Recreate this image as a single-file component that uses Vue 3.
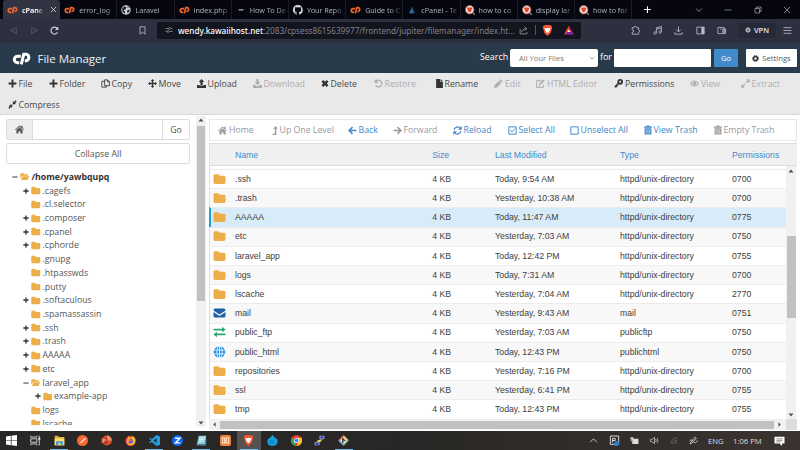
<script setup>
import { h } from 'vue'

const line = (d, w = 1.5) => `<path d="${d}" fill="none" stroke="currentColor" stroke-width="${w}"/>`
const fill = (d, c = 'currentColor') => `<path d="${d}" fill="${c}"/>`

const art = {
  cp: ['<path d="M8.800 4.300H5.500a3.200 3.200 0 0 0 0 6.400h1.700M9.300 12.300L11.700 2.300H14.300a3.300 3.300 0 0 1 0 6.400H12.800" fill="none" stroke="currentColor" stroke-width="3"/>', '0 0 19 13'],
  globeTab: ['<circle cx="8" cy="8" r="7.500" fill="#d8dade"/><path d="M2 5l4-3 3 2-2 3-3 1 3 3-1 3-4-4zM10 8l4-1-1 4-3 2zM10 2l3 2-2 1z" fill="#20222d"/>'],
  dash: [fill('M4 7h8v1.600H4z')],
  github: [fill('M8 0a8 8 0 0 0-2.500 15.600c.4 0 .5-.2.5-.4v-1.500c-2.200.5-2.700-1-2.700-1-.4-.9-.9-1.200-.9-1.200-.7-.5.1-.5.1-.5.8.1 1.200.8 1.200.8.7 1.300 1.900.9 2.300.7.1-.5.3-.9.500-1.100-1.800-.2-3.600-.9-3.600-4 0-.9.300-1.600.8-2.100-.1-.2-.4-1 .1-2.100 0 0 .7-.2 2.200.8a7.600 7.600 0 0 1 4 0c1.500-1 2.200-.8 2.200-.8.4 1.100.2 1.900.1 2.100.5.6.8 1.300.8 2.100 0 3.100-1.900 3.700-3.700 3.900.3.300.6.8.6 1.500v2.200c0 .2.100.5.600.4A8 8 0 0 0 8 0z')],
  triTab: ['<path d="M8 2L3 13h10z" fill="#1d4a70"/><path d="M8 5l-3 8h4z" fill="#3a83b8"/>'],
  braveSearch: ['<circle cx="7.500" cy="7.500" r="6.800" fill="#f3dcd7" stroke="#a65c50" stroke-width="1.300"/><path d="M4.500 4h6l1 1.500-1.800 5L7.500 12l-2.200-1.500-1.800-5z" fill="#d94a2b"/><path d="M12.500 12.500l3 3" stroke="#b08a86" stroke-width="2"/>'],
  plus: [fill('M6.300 1h3.400v5.300H15v3.400H9.700V15H6.300V9.700H1V6.300h5.300z')],
  thinPlus: [line('M8 2v12M2 8h12', 2)],
  minus: [fill('M1 6.800h14v2.600H1z')],
  winMin: [line('M1 8h14', 1.300)],
  chev: [line('M2.500 5L8 11l5.500-6')],
  chevUp: [line('M2 11l6-6 6 6')],
  restoreWin: [line('M2 5h9v9H2zM5 5V2h9v9h-3', 1.400)],
  close: [line('M2 2l12 12M14 2L2 14')],
  back: [line('M13 2.500v11L3 8z', 1.400)],
  forward: [line('M3 2.500v11L13 8z', 1.400)],
  reload: [line('M13.500 11A6.200 6.200 0 1 1 13 4.500', 2) + fill('M14.800 1v6H9z')],
  bookmark: [line('M3.500 1.500h9v13L8 11l-4.500 3.500z')],
  tune: [line('M1 5h6M1 11h3M9 11h6M12 5h3', 1.700) + '<circle cx="9" cy="5" r="2" fill="none" stroke="currentColor" stroke-width="1.500"/><circle cx="6" cy="11" r="2" fill="none" stroke="currentColor" stroke-width="1.500"/>'],
  share: [line('M2 5v9h12v-3M5 11c0-4 3-6 8-6M10 1.500L14 5l-4 3')],
  lion: ['<path d="M4 0h8l1.500 1.500L15 2l-.500 3-2 7L8 16l-4.500-4-2-7L1 2l1.500-.500z" fill="#f0562b"/><path d="M3.500 4l3 .8L8 4l1.500.8 3-.8-1 4-1.500 1 .500 1L8 12l-2.500-2 .500-1-1.500-1z" fill="#fff"/>'],
  bat: ['<path d="M8 1L0 15h16z" fill="#9d1f79"/><path d="M8 1L0 15l8-4.500z" fill="#ff4a18"/><path d="M0 15h16l-8-5z" fill="#712b97"/><path d="M8 7l-2.500 4h5z" fill="#fff"/>'],
  puzzle: [line('M2 3h3a2.500 2.500 0 0 1 5 0h3.500v4a2.300 2.300 0 0 1 0 4.500V14.500H2v-3a2.500 2.500 0 0 0 0-5z')],
  music: [line('M6 12V3l9-2v9M6 5.500l9-2') + '<circle cx="3.800" cy="12.500" r="2.200" fill="none" stroke="currentColor" stroke-width="1.400"/><circle cx="12.600" cy="10.500" r="2.200" fill="none" stroke="currentColor" stroke-width="1.400"/>'],
  dl: [line('M8 1v9M4 6.500L8 10.500l4-4M1.500 11v3.500h13V11')],
  panel: [line('M1.500 2h13v12h-13z') + fill('M9.500 2h5v12h-5z')],
  wallet: [line('M1.500 2.500h11v11h-11zM12.500 5H15v8.500h-3M5 5.500h10M9.500 8.500H15V11H9.500z', 1.400)],
  vpn: ['<circle cx="8" cy="8" r="5.500" fill="none" stroke="currentColor" stroke-width="2.500"/>' + line('M3 6h10M3 10h10M8 2v12', 1)],
  menu: [line('M1 3h14M1 8h14M1 13h14')],
  gear: ['<circle cx="8" cy="8" r="4.500" fill="none" stroke="currentColor" stroke-width="3.500"/><circle cx="8" cy="8" r="6.900" fill="none" stroke="currentColor" stroke-width="2" stroke-dasharray="2.900 2.520"/>'],
  copy: [line('M6.500 1.500h5L15 5v7H6.500zM11.500 1.500V5H15M6.500 4H1.500v10.500h8V12', 1.500)],
  move: [fill('M8 0l3.200 3.500H9.200v3.300h3.300V4.800L16 8l-3.500 3.200V9.200H9.200v3.300h2L8 16l-3.200-3.500h2V9.200H3.500v2L0 8l3.500-3.200v2h3.300V3.500h-2z')],
  upload: [fill('M8 0l5 5.500h-3V11H6V5.500H3zM0 10.500h4.500V12h7v-1.500H16V16H0z')],
  download: [fill('M6 0h4v5.500h3L8 11 3 5.500h3zM0 10.500h3.500L8 13.500l4.500-3H16V16H0z')],
  times: [fill('M4.500 1L8 4.500 11.500 1 15 4.500 11.500 8l3.500 3.500-3.500 3.500L8 11.500 4.500 15 1 11.500 4.500 8 1 4.500z')],
  undo: [line('M3.500 4A6 6 0 1 1 3 11.500', 2.200) + fill('M1 0v7h7z')],
  file: [fill('M0 0h7v5h5v11H0zM8 0l4 4H8z'), '0 0 12 16'],
  pencil: [fill('M11.500.500l4 4-2 2-4-4zM8.500 3.500l4 4L5 15l-5 1 1-5z')],
  compose: [line('M13 9.500V15H1V2.500h8.500', 1.700) + fill('M13 .500L15.500 3 9 9.500l-4 1.500 1.500-4z') + line('M3.500 5h3M3.500 12.500h6', 1)],
  key: ['<circle cx="11" cy="5" r="3.400" fill="none" stroke="currentColor" stroke-width="3.200"/>' + line('M9 7L1.500 14.500M3.500 12l2 2', 3)],
  eye: [line('M1 8c3.500-6 10.500-6 14 0-3.500 6-10.500 6-14 0z', 2) + '<circle cx="8" cy="8" r="3.200" fill="currentColor"/>'],
  expand: [fill('M9.500.500h6v6l-2-2-3.200 3.200-1.800-1.800 3.200-3.200zM6.500 15.500h-6v-6l2 2 3.200-3.200 1.800 1.800-3.200 3.200z')],
  compress: [fill('M15.500 2.300L13.700.500 10.700 3.500 9 1.800 8.200 7.800l6-.800-1.700-1.700zM.500 13.700l1.800 1.800 3-3L7 14.200l.800-6-6 .800 1.700 1.700z')],
  home: [fill('M0 8l8-7 3 2.600V1.500h2.500v4.300L16 8l-1 1-7-6-7 6zM2.500 9L8 4.400 13.500 9v6H9.700v-4H6.300v4H2.500z')],
  level: [fill('M6 0l4 5H7.300v11H0l2-2.400h2.700V5H2z'), '0 0 10 16'],
  left: [line('M8 2L2 8l6 6M2 8h13', 2.700)],
  right: [line('M8 2l6 6-6 6M14 8H1', 2.700)],
  refresh: [line('M2 7a6 6 0 0 1 11-2.500M14 9A6 6 0 0 1 3 11.500', 2.200) + fill('M15.500 0v6.500H9zM.500 16V9.500H7z')],
  check: [line('M1.500 1.500h13v13h-13zM4 7.500l3 3 5.500-6', 1.700)],
  box: [line('M1.500 1.500h13v13h-13z', 1.700)],
  trash: [fill('M0 2h4l1-2h4l1 2h4v2H0zM1 5h12v11H1z') + '<path d="M4 6.500v8M7 6.500v8M10 6.500v8" stroke="#fff" stroke-width="1"/>', '0 0 14 16'],
  folder: [fill('M1.500 1.500h5L8.500 3.500h6L16 5v8l-1.500 1.500h-13L0 13V3z')],
  folderOpen: [fill('M1.500 2h5L8 4h6v2.500H4L0 12V3.500zM4.500 7.500H16L13 14H1z')],
  mail: [fill('M1.500 2h13L16 3.500v1L8 10 0 4.500v-1zM0 6.500l8 5.500 8-5.500v6L14.500 14h-13L0 12.500z')],
  swap: [line('M0 4.800h13M3 11.200h13', 2.200) + fill('M11.500 1l4.500 3.800-4.500 3.800zM4.500 7.400L0 11.200 4.500 15z')],
  globe: ['<circle cx="8" cy="8" r="7.700" fill="currentColor"/><g fill="none" stroke="#fff" stroke-width="1.100"><ellipse cx="8" cy="8" rx="3.500" ry="8"/><path d="M8 0v16M0 5.500h16M0 10.500h16"/></g>'],
  up: [fill('M8 5l5 6H3z')],
  down: [fill('M8 11L3 5h10z')],
  triL: [fill('M10.500 3v10L5 8z')],
  triR: [fill('M5.500 3v10L11 8z')],
  windows: ['<path d="M0 2.200l7-1v6.300H0zM8 1l8-1v7.500H8zM0 8.500h7v6.300l-7-1zM8 8.500h8V16l-8-1z" fill="#fff"/>'],
  taskview: [line('M1 1v2h9V1M1 15v-2h9v2M1 5.500h9v5H1zM13.500 1v14', 1.300) + fill('M12 4h3v3h-3z')],
  explorer: ['<path d="M1 1h5l1 2h8v12H1z" fill="#e6ae35"/><path d="M1 5h14v10H1z" fill="#ffdc72"/><path d="M3 9h10v6h-3v-3H6v3H3z" fill="#3e9bd7"/>'],
  postman: ['<circle cx="8" cy="8" r="8" fill="#f76934"/><path d="M4 12l6-7 2-1 .5 2-6 5.500z" fill="#ffd9c8"/>'],
  ppt: ['<circle cx="8.500" cy="8" r="7.300" fill="#d9502f"/><path d="M8.500.700V8h7.300a7.300 7.300 0 0 0-7.300-7.300z" fill="#f08a68"/><rect y="4" width="9" height="8.500" rx="1" fill="#b3301c"/><path d="M3 11V6h2a1.500 1.500 0 0 1 0 3H3" stroke="#fff" fill="none"/>'],
  firefox: ['<circle cx="8" cy="8.500" r="7.500" fill="#f34445"/><path d="M5 1c0 3 3 3 5 3l1-3c3 2 5 5 4 8a6 6 0 0 1-6 6c-4 0-7-3-6-7z" fill="#ffb628"/><circle cx="8" cy="9" r="3.600" fill="#7850d2"/><path d="M4 7c3-2 5 0 5 1l-4 2z" fill="#ff8930"/>'],
  vscode: ['<path d="M11 0l5 2v12l-5 2-7-6-2.500 2L0 11l3.500-3L0 5l1.500-1L4 6zm0 4.500L6.500 8l4.500 3.500z" fill="#259ee0"/>'],
  zoomApp: ['<circle cx="8" cy="8" r="8" fill="#1267ed"/><path d="M4.500 4.700h7L5 11.500h7" fill="none" stroke="#fff" stroke-width="2"/>'],
  notepad: ['<path d="M4 1h11l-2 14H1z" fill="#8dd0dc"/><path d="M5 4h8M4.500 6.500h8M4 9h7" stroke="#effcff" stroke-width="1.200"/><path d="M1 13h12l2-8v10H1z" fill="#4d8493"/>'],
  xampp: ['<rect width="16" height="16" rx="3" fill="#f0823c"/><path d="M3.500 4.500H7v7H3.500zM9 4.500h3.500v7H9zM6 8h4" fill="none" stroke="#fde3cd" stroke-width="1.500"/>'],
  drop: ['<path d="M8 0l3 3.500 4 2.500.5 4-2 4-3 1.500h-5L2 14 .5 10 1 6l4-2.500z" fill="#1a9fe0"/><path d="M4.500 7l6 1 1.500 4-5.500 1.500-3-2z" fill="#0c8bd0"/>'],
  chrome: ['<circle cx="8" cy="8" r="8" fill="#e34133"/><path d="M1 4l5.500 8L8 16A8 8 0 0 1 1 4z" fill="#2da94f"/><path d="M15 4H8l4 5-4 7a8 8 0 0 0 7-12z" fill="#fbc51c"/><circle cx="8" cy="8" r="3.800" fill="#fff"/><circle cx="8" cy="8" r="2.900" fill="#4386ee"/>'],
  putty: ['<path d="M8 1h7v5H8zM1 10h7v5H1z" fill="#9da2d6"/><path d="M9.500 2h4v3h-4zM2.500 11h4v3h-4z" fill="#2430ad"/><path d="M12 7L7 8l3 1-6 1" stroke="#f0dd66" fill="none" stroke-width="1.500"/>'],
  git: ['<path d="M8 0L0 8h8z" fill="#e8695c"/><path d="M8 0l8 8H8z" fill="#e9c95a"/><path d="M0 8l8 8V8z" fill="#7aa8e0"/><path d="M16 8l-8 8V8z" fill="#7dbb6c"/><path d="M8 3l5 5-5 5-5-5z" fill="#f5f2ee"/><path d="M7 4.500v7M7 6l3.500 2.500" stroke="#242424" stroke-width="1.800"/>'],
  tray1: [line('M2 1.500h12v12H2zM5 11V5h4v3H5', 1.400) + '<path d="M8 9h7v5l-3 2H8z" fill="#247ed0"/>'],
  battery: [fill('M4 5h11v9H4zM1 2h5v4H1z') + line('M2 6v3h2', 1.200)],
  speaker: [line('M1 6h3l4-4v12l-4-4H1zM10 5.500q2 2.500 0 5M12.500 4q3 4 0 8', 1.200)],
  wifi: ['<path d="M3 14C4 8 8 4 14 3M6.500 14c1-4 4-6 8-6.500M10 14c.500-2 2-3 4.500-3.200" fill="none" stroke="currentColor" stroke-width="1.300"/>'],
  pen: [line('M2 14l3-1 8-9-2-2-8 9zM1 9c2-3 5-2 7 1s5 3 7-2', 1.500)],
  note: ['<path d="M0 1h16v11h-4v4l-4-4H0z" fill="#fff"/><path d="M3 4.500h10M3 7h10M3 9.500h7" stroke="#555" stroke-width="1"/>'],
}
const Icon = (p) => h('svg', { viewBox: art[p.n][1] || '0 0 16 16', innerHTML: art[p.n][0], 'aria-hidden': 'true' })
Icon.props = ['n']

const tabs = [
  ['cp', 'cPane'], ['cp', 'error_log'], ['globeTab', 'Laravel'], ['cp', 'index.php'], ['dash', 'How To De'],
  ['github', 'Your Repo'], ['cp', 'Guide to C'], ['triTab', 'cPanel - Te'], ['braveSearch', 'how to co'],
  ['braveSearch', 'display lar'], ['braveSearch', 'how to for'],
]
const tools = [
  ['plus', 'File'], ['plus', 'Folder'], ['copy', 'Copy'], ['move', 'Move'], ['upload', 'Upload'],
  ['download', 'Download', 1], ['times', 'Delete'], ['undo', 'Restore', 1], ['file', 'Rename'], ['pencil', 'Edit', 1],
  ['compose', 'HTML Editor', 1], ['key', 'Permissions'], ['eye', 'View', 1], ['expand', 'Extract', 1],
]
const actions = [
  ['home', 'Home', 1], ['level', 'Up One Level', 1], ['left', 'Back'], ['right', 'Forward', 1], ['refresh', 'Reload'],
  ['check', 'Select All'], ['box', 'Unselect All'], ['trash', 'View Trash'], ['trash', 'Empty Trash', 1],
]
const tree = [
  [0, '-', '/home/yawbqupq'], [1, '+', '.cagefs'], [1, '', '.cl.selector'], [1, '+', '.composer'], [1, '+', '.cpanel'],
  [1, '+', '.cphorde'], [1, '', '.gnupg'], [1, '', '.htpasswds'], [1, '', '.putty'], [1, '+', '.softaculous'],
  [1, '', '.spamassassin'], [1, '+', '.ssh'], [1, '+', '.trash'], [1, '+', 'AAAAA'], [1, '+', 'etc'],
  [1, '-', 'laravel_app'], [2, '+', 'example-app'], [1, '', 'logs'], [1, '', 'lscache'],
]
const dir = 'httpd/unix-directory'
const rows = [
  ['folder', '.ssh', 'Today, 9:54 AM', dir, '0700'],
  ['folder', '.trash', 'Yesterday, 10:38 AM', dir, '0700'],
  ['folder', 'AAAAA', 'Today, 11:47 AM', dir, '0775'],
  ['folder', 'etc', 'Yesterday, 7:03 AM', dir, '0750'],
  ['folder', 'laravel_app', 'Today, 12:42 PM', dir, '0755'],
  ['folder', 'logs', 'Today, 7:31 AM', dir, '0700'],
  ['folder', 'lscache', 'Yesterday, 7:04 AM', dir, '2770'],
  ['mail', 'mail', 'Yesterday, 9:43 AM', 'mail', '0751'],
  ['swap', 'public_ftp', 'Yesterday, 7:03 AM', 'publicftp', '0750'],
  ['globe', 'public_html', 'Today, 12:43 PM', 'publichtml', '0750'],
  ['folder', 'repositories', 'Yesterday, 7:16 PM', dir, '0700'],
  ['folder', 'ssl', 'Yesterday, 6:41 PM', dir, '0755'],
  ['folder', 'tmp', 'Today, 12:43 PM', dir, '0755'],
]
const apps = [
  ['windows'], ['taskview'], ['explorer', 1], ['postman'], ['ppt'], ['firefox'], ['vscode', 1], ['zoomApp'],
  ['notepad', 1], ['xampp'], ['lion', 2], ['drop'], ['chrome'], ['putty'], ['git', 1],
]
</script>

<template>
  <div class="screen">
    <div class="tabs">
      <div v-for="(t, i) in tabs" :key="i" class="tab" :class="{ active: i === 0 }">
        <Icon :n="t[0]" class="fav" :class="t[0]" />
        <span>{{ t[1] }}</span>
        <Icon v-if="i === 0" n="close" class="tabx" />
      </div>
      <Icon n="thinPlus" class="newtab" />
      <div class="wincontrols">
        <Icon n="chev" /><Icon n="winMin" /><Icon n="restoreWin" /><Icon n="close" />
      </div>
    </div>

    <div class="nav">
      <div class="navleft"><Icon n="back" class="off" /><Icon n="forward" class="off" /><Icon n="reload" class="rl" /></div>
      <Icon n="bookmark" class="bm" />
      <div class="url">
        <Icon n="tune" class="tune" />
        <span class="addr"><b>wendy.kawaiihost.net</b>:2083/cpsess8615639977/frontend/jupiter/filemanager/index.ht...</span>
        <Icon n="share" class="share" /><i></i><Icon n="lion" class="shield" /><Icon n="bat" class="bat" />
      </div>
      <div class="navright">
        <Icon n="puzzle" /><Icon n="music" /><Icon n="dl" /><Icon n="panel" /><Icon n="wallet" />
      </div>
      <div class="vpn"><Icon n="vpn" />VPN</div>
      <Icon n="menu" class="menu" />
    </div>

    <header>
      <Icon n="cp" class="logo" />
      <h1>File Manager</h1>
      <label class="searchlabel">Search</label>
      <div class="select">All Your Files<Icon n="chev" /></div>
      <label class="for">for</label>
      <div class="input"></div>
      <button class="go">Go</button>
      <button class="settings"><Icon n="gear" />Settings</button>
    </header>

    <div class="toolbar">
      <div class="tools">
        <div v-for="t in tools" :key="t[1]" class="tool" :class="{ dim: t[2] }"><Icon :n="t[0]" :class="'t-' + t[0]" />{{ t[1] }}</div>
      </div>
      <div class="tools second"><div class="tool"><Icon n="compress" />Compress</div></div>
    </div>

    <main>
      <aside>
        <div class="path"><div class="homebtn"><Icon n="home" /></div><div class="pathin"></div><div class="pathgo">Go</div></div>
        <div class="collapse">Collapse All</div>
        <div class="tree">
          <div v-for="n in tree" :key="n[2]" class="node" :class="'level' + n[0]">
            <span class="tog"><Icon v-if="n[1]" :n="n[1] === '+' ? 'plus' : 'minus'" /></span>
            <Icon :n="n[1] === '-' ? 'folderOpen' : 'folder'" class="fold" />
            <span class="nname">{{ n[2] }}</span>
          </div>
        </div>
      </aside>
      <div class="vscroll side"><Icon n="up" /><div class="thumb"></div><Icon n="down" /></div>

      <section>
        <div class="actions">
          <div v-for="a in actions" :key="a[1]" class="act" :class="{ dim: a[2] }"><Icon :n="a[0]" :class="'i-' + a[0]" />{{ a[1] }}</div>
        </div>
        <div class="thead row"><span></span><span>Name</span><span>Size</span><span>Last Modified</span><span>Type</span><span>Permissions</span></div>
        <div class="body">
          <div class="rows">
            <div v-for="(r, i) in rows" :key="r[1]" class="row item" :class="{ odd: i % 2, sel: i === 2 }">
              <span class="ic"><Icon :n="r[0]" :class="'f-' + r[0]" /></span>
              <span>{{ r[1] }}</span><span>4 KB</span><span>{{ r[2] }}</span><span>{{ r[3] }}</span><span>{{ r[4] }}</span>
            </div>
          </div>
          <div class="vscroll list"><Icon n="up" /><div class="thumb"></div><Icon n="down" /></div>
        </div>
        <div class="hscroll"><Icon n="triL" /><div class="hthumb"></div><Icon n="triR" /><div class="corner"></div></div>
      </section>
    </main>

    <footer>
      <div class="apps">
        <div v-for="a in apps" :key="a[0]" class="app" :class="{ open: a[1], front: a[1] === 2 }"><Icon :n="a[0]" /></div>
      </div>
      <div class="tray">
        <Icon n="chevUp" /><Icon n="tray1" class="big" /><Icon n="battery" /><Icon n="speaker" /><Icon n="wifi" class="faint" /><Icon n="pen" />
      </div>
      <span class="lang">ENG</span><span class="time">1:06 PM</span>
      <Icon n="note" class="note" />
    </footer>
  </div>
</template>

<style>
body { overflow: hidden; background: #fff; }
</style>
<style scoped>
* { box-sizing: border-box; }
svg { display: block; flex: none; width: 9px; height: 9px; }
.screen { width: 800px; height: 450px; overflow: hidden; display: flex; flex-direction: column; font-family: "Open Sans", sans-serif; font-size: 8.750px; color: #333; background: #fff; white-space: nowrap; }

.tabs { height: 19px; flex: none; display: flex; align-items: center; padding-left: 3px; background: #05060f; font-family: "Noto Sans", sans-serif; font-size: 7.200px; color: #a9abb5; }
.tab { width: 57.200px; height: 19px; flex: none; display: flex; align-items: center; padding-left: 4px; border-right: 1px solid #1b1c26; }
.tab span { width: 38px; margin-left: 4px; mask-image: linear-gradient(90deg, #000 70%, rgba(0, 0, 0, .15) 100%); }
.tab.active { background: #323443; color: #fff; font-weight: 600; border: 0; border-radius: 3px 3px 0 0; }
.tab.active span { width: 21px; margin-right: 7px; }
.tabx { width: 7px; height: 7px; }
.fav { width: 10px; height: 10px; color: #dadce2; }
.fav.cp { color: #f0642a; width: 11px; height: 8px; }
.newtab { margin-left: 11px; width: 9px; height: 9px; color: #fff; }
.wincontrols { display: flex; justify-content: space-between; width: 96px; margin-left: 43px; color: #a9aab2; }
.wincontrols svg { width: 8px; height: 8px; }

.nav { height: 24px; flex: none; display: flex; align-items: center; padding-bottom: 2px; background: #2d303f; color: #b9bcc6; }
.navleft { width: 58px; margin-left: 9px; display: flex; gap: 11.500px; }
.off { color: #5d606e; }
.rl { color: #d5d7dd; }
.bm { margin-left: 71px; margin-right: 10px; }
.url { width: 424px; height: 17px; display: flex; align-items: center; padding-left: 8px; border-radius: 2px; background: #12141e; font-family: "Noto Sans", sans-serif; font-size: 8.200px; color: #80828c; }
.tune { width: 8px; height: 8px; color: #8b8d98; }
.addr { width: 336px; margin-left: 5px; }
.addr b { color: #fff; font-weight: 500; }
.share { margin-left: 5px; color: #9a9ca6; }
.url i { width: 1px; height: 10px; margin: 0 6px 0 7px; background: #555864; }
.shield { width: 11px; height: 11px; }
.bat { margin-left: 11px; width: 10px; height: 10px; }
.navright { width: 95px; margin-left: 50px; display: flex; justify-content: space-between; }
.vpn { width: 38px; height: 15px; margin-left: 12px; display: flex; align-items: center; justify-content: center; gap: 3px; border-radius: 3px; background: #262a38; color: #e4e6ea; font-size: 7.500px; font-weight: 600; }
.vpn svg { width: 6px; height: 6px; }
.menu { margin-left: 7px; }

header { height: 30px; flex: none; display: flex; align-items: center; background: #293a4a; color: #fff; }
.logo { width: 19px; height: 13px; margin-left: 12px; }
h1 { width: 437px; margin: 0 0 0 6.500px; font-size: 11.500px; font-weight: 400; color: #eef1f3; }
.searchlabel { width: 30px; margin-left: 5.500px; margin-top: -3px; font-size: 8.900px; }
.select { width: 88px; height: 18px; display: flex; align-items: center; justify-content: space-between; padding: 0 3px 0 9px; border-radius: 2px; background: #fff; color: #777; font-size: 7.600px; }
.select svg { width: 6px; height: 6px; color: #555; }
.for { width: 14px; margin-left: 2px; margin-top: -3px; font-size: 8.900px; }
.input { width: 97px; height: 18px; border-radius: 1px; background: #fff; }
button { border: 0; padding: 0; height: 18px; font-family: inherit; font-size: 7.700px; display: flex; align-items: center; justify-content: center; border-radius: 1px; }
.go { width: 24px; margin-left: 3px; background: #428bca; color: #fff; }
.settings { width: 51px; margin-left: 8px; gap: 3px; background: #fff; color: #555; }
.settings svg { width: 7px; height: 7px; color: #333; }

.toolbar { height: 42px; flex: none; background: #e9e9e9; border-bottom: 1px solid #d8d8d8; }
.tools { height: 21px; padding-left: 7.500px; display: grid; align-items: center; grid-template-columns: 41px 52px 47px 49px 56px 68.500px 52.500px 62px 58.500px 42px 78px 76px 50.500px 50px; }
.tool { display: flex; align-items: center; gap: 2px; color: #484848; }
.tool svg { color: #333; }
.tool .t-file { width: 7px; }
.tool .t-times { width: 8px; margin-right: -.500px; }
.tool.dim, .tool.dim svg { color: #adadad; }

main { height: 316px; flex: none; display: flex; overflow: hidden; background: #fff; }
aside { width: 190px; height: 310px; margin-left: 6px; overflow: hidden; padding-top: 4px; }
.path { width: 184px; height: 21px; display: flex; border: 1px solid #ddd; border-radius: 2px; color: #555; }
.homebtn { width: 26px; display: flex; align-items: center; justify-content: center; background: #eee; border-right: 1px solid #ddd; }
.pathin { flex: 1; }
.pathgo { width: 27px; display: flex; align-items: center; justify-content: center; border-left: 1px solid #ddd; }
.collapse { width: 184px; height: 21px; margin-top: 3px; display: flex; align-items: center; justify-content: center; border: 1px solid #ddd; border-radius: 2px; color: #555; }
.tree { margin-top: 6px; color: #555; }
.node { height: 13.730px; display: flex; align-items: center; padding-left: 17px; }
.node.level0 { padding-left: 6px; font-weight: 700; color: #333; }
.node.level2 { padding-left: 28.500px; }
.tog { width: 6px; color: #333; }
.tog svg { width: 6px; height: 6px; }
.fold { width: 9.500px; height: 9px; margin: 0 2px; color: #edad48; }

.vscroll { width: 10px; display: flex; flex-direction: column; align-items: center; background: #f1f1f1; color: #505050; }
.vscroll svg { width: 8px; height: 8px; }
.thumb { background: #c1c1c1; }
.side { height: 311px; margin-top: 1px; }
.side svg:last-child, .list svg:last-child { margin-top: auto; }
.side .thumb { width: 8px; height: 175px; margin-top: 2px; }

section { width: 588px; margin-left: 3px; padding-top: 4px; }
.actions { width: 588px; height: 22px; padding-left: 8px; display: grid; align-items: center; border: 1px solid #e7e7e7; color: #4187c6; grid-template-columns: 53.500px 76px 45px 60px 55px 62px 74px 70px 70px; }
.act { display: flex; align-items: center; gap: 2px; }
.act.dim { color: #999; }
.act .i-level { width: 6px; }
.act .i-trash { width: 8px; height: 10px; margin-top: -1px; }
.row { display: grid; grid-template-columns: 25px 197.300px 62.700px 125px 112px 1fr; align-items: center; font-family: "Liberation Sans", sans-serif; font-size: 8.700px; }
.thead { height: 23px; margin-top: 2px; border: solid #ddd; border-width: 1px 0 1px 1px; background: #f0f0f0; color: #428bca; }
.body { height: 253px; display: flex; background: #fff; }
.rows { width: 577px; padding-top: 3px; border-left: 1px solid #ddd; }
.item { height: 19.200px; border-top: 1px solid #ececec; padding-bottom: .500px; color: #404040; }
.item.odd { background: #f8f8f8; }
.item.sel { background: #d7ecf8; box-shadow: -1px 0 0 #1f9fd6, inset 1px 0 0 #1f9fd6; }
.ic svg { width: 13px; height: 12px; margin-left: 3px; }
.f-folder { color: #edad48; }
.f-mail { color: #1f5fa8; }
.f-swap { color: #2aa876; }
.f-globe { color: #1c8ddb; }
.list { height: 253px; padding-top: 1px; }
.list .thumb { width: 9px; height: 82px; margin-top: 61px; }
.hscroll { height: 11px; display: flex; align-items: center; background: #f1f1f1; color: #505050; }
.hscroll svg { width: 11px; height: 7px; }
.hthumb { width: 554px; height: 8px; background: #c1c1c1; }
.corner { margin-left: auto; width: 11px; height: 11px; background: #dcdcdc; }

footer { height: 19px; flex: none; display: flex; align-items: center; background: linear-gradient(90deg, #292827, #282725 50%, #3b3330); color: #ddd; font-size: 7.700px; }
.apps { display: flex; width: 589px; }
.app { width: 23.710px; height: 19px; display: flex; align-items: center; justify-content: center; padding-bottom: 1px; }
.app svg { width: 11px; height: 11px; }
.app.open { background: linear-gradient(#76b9ed, #76b9ed) center bottom / 18px 1.500px no-repeat; }
.app.front { background-color: #555352; }
.tray { width: 109px; display: flex; justify-content: space-between; align-items: center; }
.tray .big { width: 11px; height: 11px; }
.faint { color: #777; }
.lang { width: 15px; margin-left: 10px; }
.time { width: 28px; margin-left: 10px; }
.note { width: 11px; height: 10px; margin-left: 13px; }
</style>
